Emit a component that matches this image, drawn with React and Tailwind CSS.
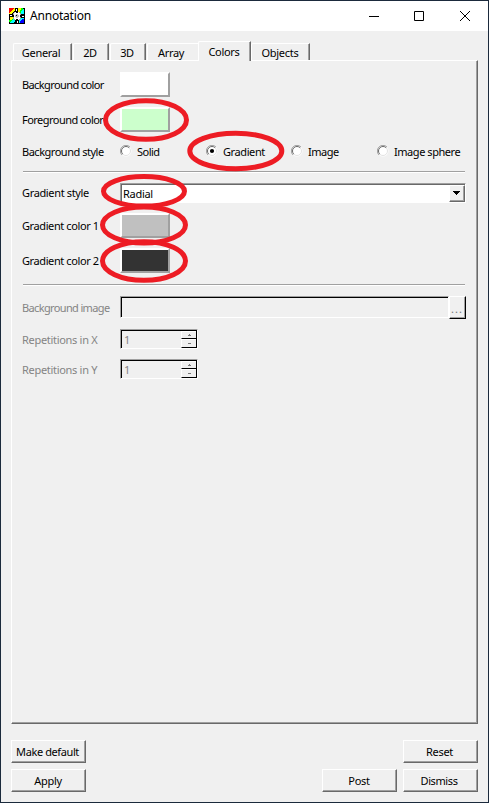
import React from "react";

const RAISED = "border-t border-l border-white";

function Text({ children, className = "", tracking = "tracking-[-0.3px]" }) {
  return (
    <span className={`block whitespace-nowrap text-[11px] leading-[14px] ${tracking} ${className}`}>
      {children}
    </span>
  );
}

/* Two-pixel raised edge: light top/left, grey then dark bottom/right. */
function Raised({ children, className = "" }) {
  return (
    <div className={`${RAISED} border-r border-b border-r-[#696969] border-b-[#696969] ${className}`}>
      <div className="flex h-full w-full items-center justify-center border-r border-b border-[#a0a0a0]">
        {children}
      </div>
    </div>
  );
}

function Tab({ label, className = "", edge = true, text = "" }) {
  return (
    <div className={`flex rounded-tl-[2px] border-t border-l border-white ${edge ? "border-r border-r-[#696969]" : ""} ${className}`}>
      <div className={`flex h-full w-full justify-center ${edge ? "border-r border-[#a0a0a0]" : ""}`}>
        <Text className={text}>{label}</Text>
      </div>
    </div>
  );
}

function Swatch({ color }) {
  return (
    <div className={`h-[25px] w-[50px] border-2 border-t-white border-l-white border-r-[#a0a0a0] border-b-[#a0a0a0] ${color}`} />
  );
}

function Row({ label, disabled, className = "", labelClass = "", tracking, children }) {
  return (
    <div className={`flex ${className}`}>
      <div className={`flex w-[98px] shrink-0 items-center ${disabled ? "text-[#848484]" : ""}`}>
        <Text className={labelClass} tracking={tracking}>{label}</Text>
      </div>
      {children}
    </div>
  );
}

function Radio({ label, checked, className = "", tracking }) {
  return (
    <div className={`flex shrink-0 items-center gap-[5px] ${className}`}>
      <svg width="12" height="12" viewBox="0 0 12 12" className="-mt-[2px]">
        <circle cx="6" cy="6" r="5.5" fill="#fff" />
        <path d="M2 10A5.5 5.5 0 0 1 10 2" fill="none" stroke="#a0a0a0" />
        <path d="M2.8 9.2A4.5 4.5 0 0 1 9.2 2.8" fill="none" stroke="#696969" />
        <path d="M2.8 9.2A4.5 4.5 0 0 0 9.2 2.8" fill="none" stroke="#e3e3e3" />
        {checked && <circle cx="6" cy="6" r="2.1" fill="#000" />}
      </svg>
      <Text tracking={tracking}>{label}</Text>
    </div>
  );
}

function Divider({ className = "" }) {
  return <div className={`ml-px h-[2px] w-[442px] border-t border-b border-t-[#a0a0a0] border-b-white ${className}`} />;
}

function Spin() {
  return (
    <div className="h-5 w-[78px] border border-t-[#a0a0a0] border-l-[#a0a0a0] border-r-white border-b-white">
      <div className="flex h-full border-t border-l border-black">
        <div className="flex w-[59px] items-center pl-[2px] pt-px text-[#848484]">
          <Text>1</Text>
        </div>
        <div className="flex w-4 flex-col border-r border-black">
          <div className="flex h-2 items-center justify-center border-t border-l border-b border-t-white border-l-white border-b-black">
            <svg width="5" height="3"><path d="M2 0h1v1h1v1H1V1h1z" fill="#777" /></svg>
          </div>
          <div className="flex h-[9px] items-center justify-center border-t border-l border-b border-t-white border-l-white border-b-black">
            <svg width="5" height="3"><path d="M1 1h3v1H1z" fill="#777" /></svg>
          </div>
        </div>
      </div>
    </div>
  );
}

function AppIcon() {
  return (
    <svg width="16" height="16" viewBox="0 0 16 16" shapeRendering="crispEdges">
      <path d="M0 0h16v16H0z" fill="#000" />
      <path d="M0 0h6v1H5v1H4v1H3v1H2v1H1v1H0z" fill="#f00" />
      <path d="M6 0v3H5v1H4v1H3v1H0V5h1V4h1V3h1V2h1V1h1V0z" fill="#ff0" />
      <path d="M9 0h3v2h-1v2H9z" fill="#ff0" />
      <path d="M12 0h2v2h-1v1h-1v2h-2V4h1V2h1z" fill="#0f0" />
      <path d="M15 1v5h-4V5h1V3h1V2h1V1z" fill="#0ff" />
      <path d="M1 9h3v2H3v1H1z" fill="#ff0" />
      <path d="M4 9h1v2H4v1H3v1H2v1H0v-2h3v-1h1z" fill="#0f0" />
      <path d="M6 11v3H5v1H1v-1h1v-1h1v-1h1v-1z" fill="#0ff" />
      <path d="M10 10h5v1h-2v1h-1v1h-1v2h-1z" fill="#0ff" />
      <path d="M15 11v4h-4v-2h1v-1h1v-1z" fill="#00f" />
      <path d="M5 4h6v1h1v6h-1v1H5v-1H4V5h1z" fill="#a0a0a0" />
      <path d="M6 4h4v1h1v6h-1v1H6v-1H5V5h1z" fill="#fff" />
      <path d="M7 6h2v1h1v2H9v1H7V9H6V7h1z" fill="#c0c0c0" />
      <path d="M7 4h2v1H7zM4 7h1v2H4zM11 7h1v2h-1zM7 11h2v1H7zM7 7h1v1H7z" fill="#000" />
      <path d="M7 1h1v2H7zM1 7h2v1H1zM13 8h2v1h-2zM8 13h1v2H8z" fill="#fff" />
    </svg>
  );
}

function Ring({ cx, cy, rx, ry }) {
  return <ellipse cx={cx} cy={cy} rx={rx} ry={ry} fill="none" stroke="#ed1c24" strokeWidth="5" />;
}

export default function App() {
  return (
    <div className="relative flex h-[803px] w-[489px] flex-col overflow-hidden border border-[#1b2a3c] bg-[#f0f0f0] font-['Noto_Sans',Tahoma,sans-serif] text-black">
      <header className="flex h-[30px] shrink-0 items-center bg-white pl-2">
        <AppIcon />
        <span className="ml-[5px] text-[12px] leading-4 tracking-[-0.2px]">Annotation</span>
        <div className="ml-auto flex items-center pr-[18px]">
          <svg width="10" height="10"><path d="M0 5.5h10" stroke="#000" /></svg>
          <svg className="ml-[35px]" width="10" height="10"><path d="M.5.5h9v9h-9z" fill="none" stroke="#000" /></svg>
          <svg className="ml-9" width="10" height="10"><path d="M0 0l10 10M10 0L0 10" stroke="#000" /></svg>
        </div>
      </header>

      <nav className="mt-[10px] flex h-[19px] shrink-0 items-end pl-3">
        <Tab label="General" className="h-[17px] w-[59px]" text="pt-[2px] -ml-[2px]" />
        <Tab label="2D" className="ml-px h-[17px] w-9" text="pt-[2px] -ml-px" />
        <Tab label="3D" className="ml-px h-[17px] w-9" text="pt-[2px] -ml-px" />
        <Tab label="Array" edge={false} className="ml-px h-[17px] w-[51px]" text="pt-[2px] -ml-[4px]" />
        <Tab label="Colors" className="z-10 -mb-px h-5 w-[53px] bg-[#f0f0f0]" text="pt-[3px]" />
        <Tab label="Objects" className="h-[17px] w-[59px]" text="pt-[2px]" />
      </nav>

      <div className="ml-[10px] h-[664px] w-[467px] shrink-0 border border-t-white border-l-white border-r-[#696969] border-b-[#696969]">
        <div className="h-full border-r border-b border-[#a0a0a0] pl-[10px] pt-[11px]">
          <Row label="Background color" tracking="tracking-[-0.6px]"><Swatch color="bg-white" /></Row>
          <Row label="Foreground color" tracking="tracking-[-0.53px]" className="mt-[10px]"><Swatch color="bg-[#ccffcc]" /></Row>
          <Row label="Background style" tracking="tracking-[-0.48px]" className="mt-3 h-[15px]">
            <Radio label="Solid" tracking="tracking-[-0.5px]" className="w-[86px]" />
            <Radio label="Gradient" checked tracking="tracking-[-0.4px]" className="w-[85px]" />
            <Radio label="Image" tracking="tracking-[-0.5px]" className="w-[86px]" />
            <Radio label="Image sphere" tracking="tracking-[-0.45px]" />
          </Row>
          <Divider className="mt-3" />
          <Row label="Gradient style" tracking="tracking-[-0.35px]" className="mt-[10px]">
            <div className="h-5 w-[346px] border border-t-[#a0a0a0] border-l-[#a0a0a0] border-r-white border-b-white">
              <div className="flex h-full items-center justify-between border-t border-l border-[#696969] bg-white pl-px">
                <Text>Radial</Text>
                <Raised className="h-[17px] w-4 bg-[#f0f0f0]">
                  <svg width="7" height="4" shapeRendering="crispEdges"><path d="M0 0h7v1H6v1H5v1H4v1H3V3H2V2H1V1H0z" /></svg>
                </Raised>
              </div>
            </div>
          </Row>
          <Row label="Gradient color 1" tracking="tracking-[-0.4px]" className="mt-[10px]"><Swatch color="bg-[#c0c0c0]" /></Row>
          <Row label="Gradient color 2" tracking="tracking-[-0.4px]" className="mt-[10px]"><Swatch color="bg-[#333333]" /></Row>
          <Divider className="mt-[11px]" />
          <Row label="Background image" tracking="tracking-[-0.64px]" disabled className="mt-[10px]">
            <div className="h-[22px] w-[329px] border border-t-[#a0a0a0] border-l-[#a0a0a0] border-r-white border-b-white">
              <div className="h-full border-t border-l border-black" />
            </div>
            <div className="h-[23px] w-[17px] border border-t-white border-l-white border-r-black border-b-black">
              <div className="flex h-full items-center justify-center border-r border-b border-[#a0a0a0] pt-1 text-[#777]">
                <Text tracking="tracking-[1px]">...</Text>
              </div>
            </div>
          </Row>
          <Row label="Repetitions in X" labelClass="pt-[2px]" disabled className="mt-[10px]"><Spin /></Row>
          <Row label="Repetitions in Y" labelClass="pt-[2px]" disabled className="mt-[10px]"><Spin /></Row>
        </div>
      </div>

      <footer className="mt-4 flex flex-col gap-[6px] pl-[10px] pr-[10px]">
        <div className="flex justify-between">
          <Raised className="h-[23px] w-[75px]"><Text className="-ml-px pt-px" tracking="tracking-[-0.4px]">Make default</Text></Raised>
          <Raised className="h-[23px] w-[75px]"><Text className="-ml-px pt-px">Reset</Text></Raised>
        </div>
        <div className="flex gap-[6px]">
          <Raised className="mr-auto h-[23px] w-[75px]"><Text className="pt-px">Apply</Text></Raised>
          <Raised className="h-[23px] w-[75px]"><Text className="pt-px">Post</Text></Raised>
          <Raised className="h-[23px] w-[75px]"><Text className="-ml-[2px] pt-px" tracking="tracking-[-0.4px]">Dismiss</Text></Raised>
        </div>
      </footer>

      <svg className="pointer-events-none absolute -left-px -top-px z-20" width="489" height="803">
        <Ring cx={146} cy={120} rx={40.5} ry={19.3} />
        <Ring cx={235.8} cy={151} rx={46} ry={17.8} />
        <Ring cx={144} cy={191.3} rx={40.5} ry={14.8} />
        <Ring cx={144} cy={225} rx={41.5} ry={18} />
        <Ring cx={144} cy={261} rx={41.5} ry={19.3} />
      </svg>
    </div>
  );
}
